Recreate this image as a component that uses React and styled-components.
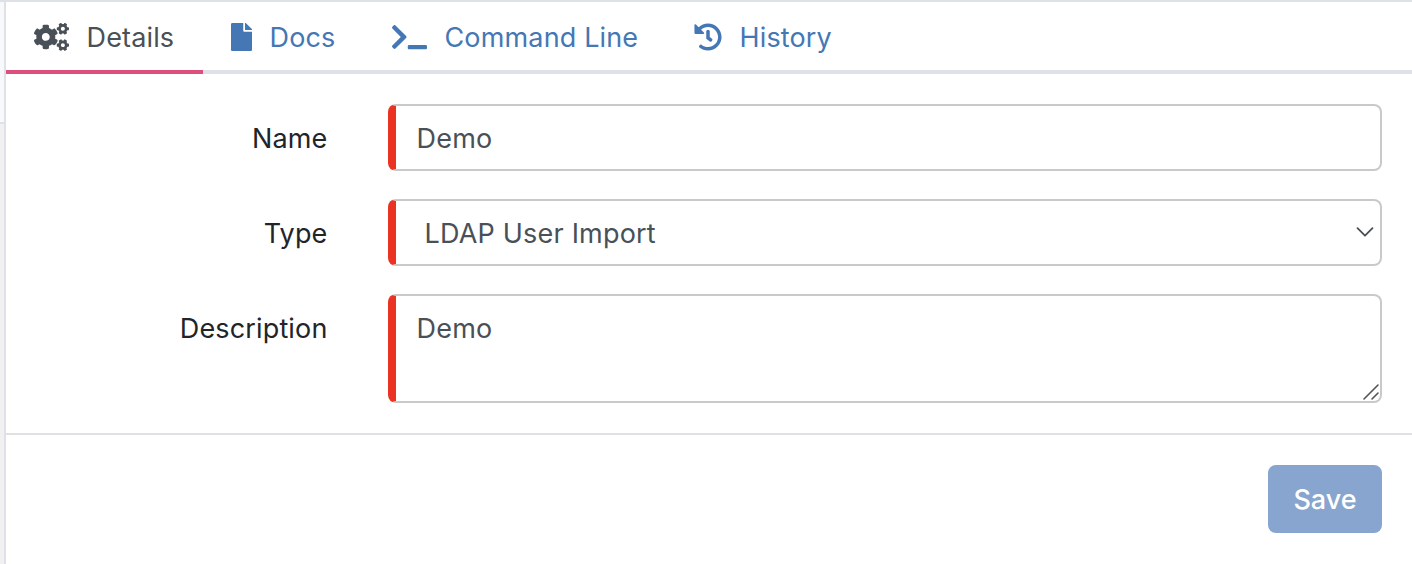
import React from "react";
import styled, { createGlobalStyle } from "styled-components";
import { FaCogs, FaFile, FaTerminal, FaHistory } from "react-icons/fa";

const GlobalStyle = createGlobalStyle`
  * { box-sizing: border-box; }
  body {
    margin: 0;
    background: #fff;
    font-family: Inter, "Liberation Sans", sans-serif;
    font-size: 27px;
    line-height: 42px;
    color: #212529;
  }
`;

const Page = styled.div`
  display: flex;
  height: 564px;
  overflow: hidden;
  border-top: 2px solid #dee1e6;
`;

const Gutter = styled.div`
  flex: none;
  width: 6px;
  background: #f1f1f1;
  border-right: 2px solid #dfe1e8;
`;

const GutterHead = styled.div`
  height: 122px;
  background: #f8f9fb;
  border-bottom: 2px solid #dfe1e8;
`;

const Main = styled.main`
  flex: 1;
  min-width: 0;
`;

const Tabs = styled.nav`
  display: flex;
  height: 72px;
  box-shadow: inset 0 -4px 0 #dfe1e8;
`;

const Tab = styled.a`
  display: flex;
  align-items: center;
  gap: 17.5px;
  width: ${(p) => p.$width}px;
  padding: 1px 0 0 28px;
  white-space: nowrap;
  color: ${(p) => (p.$active ? "#495057" : "#4577b4")};
  border-bottom: 4px solid ${(p) => (p.$active ? "#dc4f7c" : "transparent")};

  svg {
    flex: none;
    height: 28px;
    width: ${(p) => p.$icon}px;
  }
`;

const Label = styled.span`
  padding-top: 3px;
  letter-spacing: 0.15px;
`;

const Form = styled.form`
  display: grid;
  grid-template-columns: 322px 994px;
  column-gap: 60px;
  row-gap: 28px;
  padding: 30px 0;
  border-bottom: 2px solid #dfe1e5;
`;

const FieldLabel = styled.label`
  padding: 14px 0 0;
  text-align: right;
  letter-spacing: 0.15px;
  margin-right: 0.5px;
`;

const Field = styled.div`
  position: relative;
  display: flex;
  justify-content: space-between;
  height: ${(p) => p.$height || 67}px;
  padding: 12px 6px 0 ${(p) => p.$indent || 20.5}px;
  color: #495057;
  border: 2px solid #c9c9c9;
  border-left: 8px solid #eb3323;
  border-radius: 8px;
  letter-spacing: 0.2px;
`;

const Chevron = styled.svg`
  width: 18px;
  height: 12px;
  margin-top: 13px;
`;

const Grip = styled.svg`
  position: absolute;
  right: 0;
  bottom: 0;
  width: 18px;
  height: 18px;
`;

const Footer = styled.footer`
  display: flex;
  justify-content: flex-end;
  padding: 30px 30px 0;
`;

const SaveButton = styled.button`
  width: 114px;
  height: 68px;
  padding: 1px 0 0;
  border: 0;
  border-radius: 8px;
  background: #87a5ce;
  color: #fff;
  font: inherit;
  font-weight: 450;
`;

const tabs = [
  { label: "Details", Icon: FaCogs, icon: 35, width: 197, active: true },
  { label: "Docs", Icon: FaFile, icon: 21, width: 161 },
  { label: "Command Line", Icon: FaTerminal, icon: 35, width: 302 },
  { label: "History", Icon: FaHistory, icon: 28, width: 194 },
];

export default function App() {
  return (
    <Page>
      <GlobalStyle />
      <Gutter>
        <GutterHead />
      </Gutter>
      <Main>
        <Tabs>
          {tabs.map(({ label, Icon, icon, width, active }) => (
            <Tab key={label} $width={width} $icon={icon} $active={active}>
              <Icon />
              <Label>{label}</Label>
            </Tab>
          ))}
        </Tabs>
        <Form>
          <FieldLabel>Name</FieldLabel>
          <Field>Demo</Field>
          <FieldLabel>Type</FieldLabel>
          <Field $indent={28.5}>
            LDAP User Import
            <Chevron viewBox="0 0 18 12" fill="none" stroke="#495057" strokeWidth="1.8" strokeLinecap="round" strokeLinejoin="round">
              <path d="M1.5 2.2l7.5 7.5 7.5-7.5" />
            </Chevron>
          </Field>
          <FieldLabel>Description</FieldLabel>
          <Field $height={109}>
            Demo
            <Grip viewBox="0 0 18 18" stroke="#555" strokeWidth="1.6" strokeLinecap="round">
              <path d="M2 16L16 2M10 16l6-6" />
            </Grip>
          </Field>
        </Form>
        <Footer>
          <SaveButton type="button">Save</SaveButton>
        </Footer>
      </Main>
    </Page>
  );
}
